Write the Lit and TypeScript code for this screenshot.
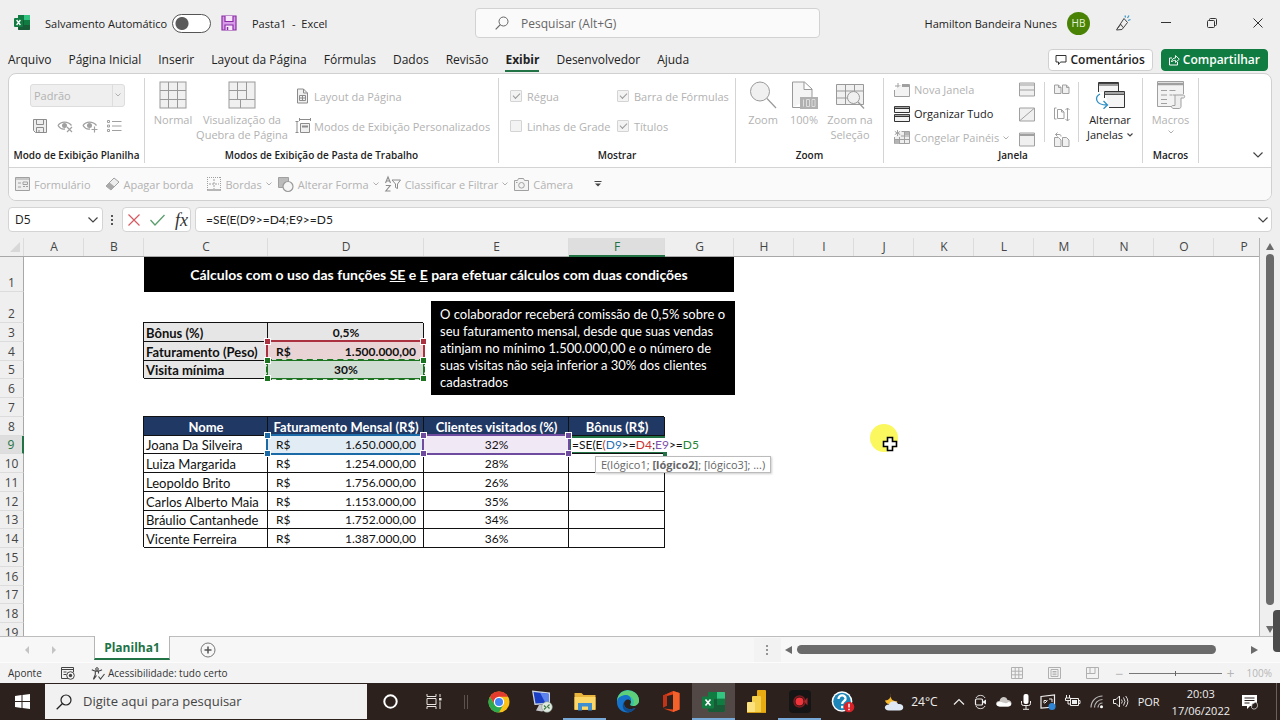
import { LitElement, html, svg, css, nothing, TemplateResult } from "lit";
import { customElement } from "lit/decorators.js";
import { classMap } from "lit/directives/class-map.js";
import { styleMap } from "lit/directives/style-map.js";

const icon = (w: number, h: number, body: TemplateResult) =>
  html`<svg class="icon" width=${w} height=${h} viewBox="0 0 ${w} ${h}" aria-hidden="true">${body}</svg>`;

const GREY = "#a0a0a0";

const icons = {
  excel: icon(16, 16, svg`<rect x="4" y="0" width="12" height="15" rx="1" fill="#21a366"/><path d="M4 0h6v5H4z" fill="#107c41"/><path d="M10 0h5a1 1 0 0 1 1 1v4h-6z" fill="#33c481"/><path d="M4 5h6v5H4z" fill="#185c37"/><path d="M10 5h6v5h-6z" fill="#107c41"/><path d="M4 10h12v4a1 1 0 0 1-1 1H5a1 1 0 0 1-1-1z" fill="#185c37"/><rect x="0" y="3" width="9" height="9" rx="1" fill="#107c41"/><path d="M2.600 5l3.800 5M6.400 5l-3.800 5" stroke="#fff" stroke-width="1.300"/>`),
  save: icon(16, 16, svg`<path d="M1 1h14v14H1z" fill="#d79be8" stroke="#8a2da5" stroke-width="1.200"/><path d="M4 1v5.500h8V1" fill="#f6e8fa" stroke="#8a2da5" stroke-width="1.200"/><path d="M4 15v-5h8v5" fill="#f6e8fa" stroke="#8a2da5" stroke-width="1.200"/><path d="M6.500 12v3" stroke="#8a2da5" stroke-width="1.500"/>`),
  saveGrey: icon(16, 16, svg`<path d="M1.500 1.500h13v13h-11l-2-2z" fill="#eee" stroke="#8c8c8c"/><path d="M4.500 1.500v5h7v-5M4.500 14.500v-5h7v5M7 12v2.500" fill="none" stroke="#8c8c8c"/>`),
  search: icon(14, 14, svg`<circle cx="8.500" cy="5.500" r="4.500" fill="none" stroke="#666"/><path d="M5.300 8.700L.7 13.300" stroke="#666" stroke-width="1.200"/>`),
  pen: icon(16, 16, svg`<path d="M9 3.500l3.500 4L7 14.500l-5.500.5L5 9.500 9 3.500zM2 14l4-5M8 12.500l-2-3" fill="none" stroke="#444"/><path d="M10.500 2.500l-.5-2M12.500 3l1.500-2.500M13 5.500l2.500-1" stroke="#3a96c8" stroke-width="1.200"/>`),
  min: icon(10, 10, svg`<path d="M0 4.500h10" stroke="#333"/>`),
  restore: icon(10, 10, svg`<rect x=".5" y="2.500" width="7" height="7" rx="1" fill="none" stroke="#333"/><path d="M2.500 2.500v-1a1 1 0 0 1 1-1H8.500a1 1 0 0 1 1 1V6.500a1 1 0 0 1-1 1H8" fill="none" stroke="#333"/>`),
  close: icon(10, 10, svg`<path d="M.5.5l9 9M9.500.5l-9 9" stroke="#333"/>`),
  comment: icon(12, 12, svg`<path d="M1 1.500h10v6.500H5.500L3.500 10.500V8H1z" fill="none" stroke="#333"/>`),
  share: icon(12, 12, svg`<path d="M4 4H1.500v7h8V8" fill="none" stroke="#fff"/><path d="M3.500 8c.3-2.800 1.700-4 4-4V1.500l3.800 3.700L7.500 8.500V6.300C5.700 6.300 4.500 6.800 3.500 8z" fill="none" stroke="#fff" stroke-width=".9"/>`),
  eyeX: icon(16, 14, svg`<path d="M1 6.500C4 2 11 2 14.500 6.500M1 6.500C3 9.500 6 10.500 8 10" fill="none" stroke="${GREY}" stroke-width="1.300"/><circle cx="7.500" cy="6.500" r="2.500" fill="${GREY}"/><path d="M10 8l5 5M15 8l-5 5" stroke="${GREY}" stroke-width="1.200"/>`),
  eyePlus: icon(16, 14, svg`<path d="M1 6.500C4 2 11 2 14.500 6.500M1 6.500C3 9.500 6 10.500 8 10" fill="none" stroke="${GREY}" stroke-width="1.300"/><circle cx="7.500" cy="6.500" r="2.500" fill="${GREY}"/><path d="M12.500 7.500v6M9.500 10.500h6" stroke="${GREY}" stroke-width="1.200"/>`),
  list: icon(15, 12, svg`<path d="M5 1.500h9.500M5 6h9.500M5 10.500h9.500" stroke="${GREY}"/><path d="M.5.5h2v2h-2zM.5 5h2v2h-2zM.5 9.500h2v2h-2z" fill="none" stroke="${GREY}"/>`),
  gridNormal: icon(28, 28, svg`<rect x="1" y="1" width="26" height="26" fill="#f0f0f0" stroke="#999"/><path d="M9.500 1v26M18.500 1v26M1 9.500h26M1 18.500h26" stroke="#999"/>`),
  gridBreak: icon(28, 28, svg`<rect x="1" y="1" width="26" height="26" fill="#f0f0f0" stroke="#999"/><path d="M9.500 1v17M18.500 1v17M1 9.500h17.500M1 18.500h26M12.500 18.500V27" stroke="#999"/>`),
  pageLayout: icon(14, 16, svg`<path d="M1.500 1h6l4 4v10h-10z" fill="#f0f0f0" stroke="#8c8c8c"/><path d="M7.500 1v4h4M3.500 7.500h6v5h-6zM6.500 7.500v5M3.500 10h6" fill="none" stroke="#8c8c8c"/>`),
  customView: icon(16, 16, svg`<path d="M.5 3.500h3M.5 14.500h3M2 3.500v11M4.500 1.500h11M4.500 0v3M15.500 0v3" stroke="#8c8c8c"/><path d="M5.500 5.500h9v9h-9z" fill="#f0f0f0" stroke="#8c8c8c"/><path d="M7 7.500h6v2H7z" fill="#8c8c8c"/>`),
  zoom: icon(28, 28, svg`<circle cx="11" cy="10.500" r="9.500" fill="#f0f0f0" stroke="#999"/><path d="M18 17.500L27 27" stroke="#999" stroke-width="1.200"/>`),
  zoom100: icon(28, 28, svg`<path d="M2.500 26.500V1h12l7.500 7v8M14 1v7.500h8M2.500 26.500h8" fill="#f4f4f4" stroke="#999"/><rect x="10" y="16" width="18" height="12" fill="#b0b0b0"/><path d="M13.500 18.500v7M16.500 18.500h3v7h-3zM22 18.500h3v7h-3z" fill="none" stroke="#ddd"/>`),
  zoomSel: icon(28, 28, svg`<path d="M.5 3.500h27v20H.5z" fill="#f0f0f0" stroke="#999"/><path d="M.5 10h27M.5 17h12M9.500 3.500v20M18.500 3.500V10" stroke="#999"/><circle cx="17.500" cy="16.500" r="6" fill="#f0f0f0" stroke="#999"/><path d="M22 21l6 6.500" stroke="#999" stroke-width="1.300"/>`),
  newWin: icon(16, 14, svg`<path d="M4 0v6M1 3h6" stroke="${GREY}"/><path d="M8 1.500h7.500v12H.5V7" fill="#f3f3f3" stroke="${GREY}"/><path d="M8 2h7v2H8z" fill="${GREY}"/>`),
  arrange: icon(16, 16, svg`<path d="M.5.5h15v6H.5zM.5 8.500h15v7H.5z" fill="#f2f2f2" stroke="#333"/><path d="M1 2.500h14M1 10.500h14" stroke="#333"/><path d="M1 1h14M1 9h14" stroke="#555"/>`),
  freeze: icon(16, 15, svg`<path d="M7.500 1.500h8v12H.5V7" fill="#eee" stroke="${GREY}"/><path d="M7 6h9M1 9.500h15M5.500 7v7M10.500 1v13" stroke="${GREY}"/><path d="M1 10h4v4H1zM11 2h4v3h-4z" fill="#b5b5b5"/><path d="M3.500 0v6M.8 1.400l5.400 3.200M6.200 1.400L.8 4.600" stroke="${GREY}"/>`),
  split: icon(16, 14, svg`<path d="M.5.5h15v13H.5z" fill="#f0f0f0" stroke="${GREY}"/><path d="M1 2.500h14M1 7.500h14" stroke="${GREY}"/>`),
  hide: icon(16, 14, svg`<path d="M.5.5h15v13H.5zM1 13L15 1" fill="#f0f0f0" stroke="${GREY}"/>`),
  unhide: icon(16, 14, svg`<path d="M.5.5h15v13H.5z" fill="#f0f0f0" stroke="${GREY}"/><path d="M1 2.500h14" stroke="${GREY}" stroke-width="2"/>`),
  sideBySide: icon(16, 12, svg`<path d="M.5 1.500h4l2.500 2.500v6H.5zM4.500 1.500V4H7M8.500 1.500h4l2.500 2.500v6H8.500zM12.500 1.500V4H15" fill="#f0f0f0" stroke="${GREY}"/>`),
  syncScroll: icon(16, 14, svg`<path d="M2.500.5h-2v11h2M3.500 2h4L10 4.500V11H3.500zM7.500 2v2.500H10" fill="none" stroke="${GREY}"/><path d="M13.500.5v13M11.500 2.500l2-2 2 2M11.500 11.500l2 2 2-2" fill="none" stroke="${GREY}"/>`),
  resetPos: icon(16, 15, svg`<path d="M.5 5.500h4L7 8v6.500H.5zM8.500 5.500h4L15 8v6.500H8.500z" fill="#f0f0f0" stroke="${GREY}"/><path d="M3.500.5l-2 2 2 2M1.500 2.500H5c2 0 2 1 2 2" fill="none" stroke="${GREY}"/>`),
  switchWin: icon(30, 28, svg`<path d="M3.500 11V1.500h20V10" fill="#f5f5f5" stroke="#333"/><path d="M3.500 2.500h20M3.500 4h20" stroke="#444"/><path d="M9.500 10.500h20v16H14M9.500 10.500V17" fill="#f5f5f5" stroke="#333"/><path d="M9.500 12h20M9.500 13.500h20" stroke="#555"/><path d="M5 13C-.5 16 0 24 12 24M8.500 20l4 4-4 3.700" fill="none" stroke="#2f8fc4" stroke-width="1.300"/>`),
  macros: icon(28, 28, svg`<path d="M16 25.500H.5V.5h26V13" fill="#f3f3f3" stroke="${GREY}"/><path d="M1 3h25" stroke="${GREY}" stroke-width="2.500"/><path d="M4 9.500h6M12.500 9.500h6M4 14h6M12.500 14h3M4 18.500h6M4 22.500h6" stroke="${GREY}"/><path d="M16 14h10.500c1.500 0 1.500 3 0 3H24v8.500c0 2-2 2-2 2h-6c-2-1-2-3 0-3h2V14" fill="#eee" stroke="${GREY}"/>`),
  form: icon(15, 14, svg`<path d="M.5.5h14v13H.5z" fill="#eee" stroke="${GREY}"/><path d="M1 2h13M3 6h3M3 10h3M8 5h4.500v2.500H8zM8 9.500h2M11 9.500h2" stroke="${GREY}" fill="none"/>`),
  eraser: icon(15, 14, svg`<path d="M9 1l5 4-8 8-5-4z" fill="#eee" stroke="${GREY}"/><path d="M4.500 5.500l5 4-3.500 3.500-5-4z" fill="#aaa"/>`),
  borders: icon(14, 14, svg`<path d="M.5 0v14M13.500 0v14M0 .5h14" stroke="${GREY}" stroke-dasharray="1 1"/><path d="M7 2v10M2 7h10" stroke="${GREY}" stroke-dasharray="2 1"/><path d="M0 13h14" stroke="${GREY}" stroke-width="1.500"/>`),
  shape: icon(16, 15, svg`<path d="M.5.5h10v10h-10z" fill="#bbb" stroke="${GREY}"/><circle cx="10" cy="9.500" r="5" fill="#f5f5f5" stroke="#999" stroke-width="1.200"/>`),
  sort: icon(16, 16, svg`<path d="M.5 7L3 1l2.500 6M1.500 5h3M.8 9.500h4.500L.8 15h4.700" fill="none" stroke="#8c8c8c" stroke-width="1.100"/><path d="M7 4h8.500L12.500 8v4.500l-2-1V8z" fill="none" stroke="#8c8c8c"/>`),
  camera: icon(15, 13, svg`<path d="M.5 2.500h3L4.500.5h5l1 2h4v10H.5z" fill="#f3f3f3" stroke="${GREY}"/><circle cx="7.500" cy="7.300" r="2.800" fill="none" stroke="${GREY}"/><path d="M2 4.500h1.500" stroke="${GREY}"/>`),
  more: icon(8, 6, svg`<path d="M.5.5h7" stroke="#444"/><path d="M1 2.500l3 3 3-3z" fill="#444"/>`),
  chevGrey: icon(6, 4, svg`<path d="M.5.5L3 3 5.500.5" fill="none" stroke="#b0b0b0"/>`),
  chevDark: icon(6, 4, svg`<path d="M.5.5L3 3 5.500.5" fill="none" stroke="#444" stroke-width="1.200"/>`),
  chevBig: icon(10, 6, svg`<path d="M.5.5L5 5 9.500.5" fill="none" stroke="#444" stroke-width="1.200"/>`),
  dots: icon(3, 10, svg`<path d="M0 0h2v2H0zM0 4h2v2H0zM0 8h2v2H0z" fill="#555"/>`),
  cancel: icon(12, 12, svg`<path d="M.5.5l11 11M11.500.5l-11 11" stroke="#d65a60" stroke-width="1.200"/>`),
  ok: icon(15, 12, svg`<path d="M.5 6l4.500 5L14.500 1" fill="none" stroke="#5a9e6c" stroke-width="1.300"/>`),
  tri: (d: string, fill: string) => icon(8, 8, svg`<path d=${d} fill=${fill}/>`),
  plus: icon(16, 16, svg`<circle cx="8" cy="8" r="7" fill="none" stroke="#777"/><path d="M8 4.500v7M4.500 8h7" stroke="#555" stroke-width="1.500"/>`),
  macroRec: icon(14, 13, svg`<path d="M7 11.500H.5v-11h12V5" fill="none" stroke="#444"/><path d="M.5 2.500h12M2.500 5h3M2.500 7.500h3" stroke="#444"/><circle cx="9.500" cy="8.500" r="3.800" fill="#f3f3f3" stroke="#444"/><circle cx="9.500" cy="8.500" r="1.700" fill="#444"/>`),
  access: icon(14, 13, svg`<circle cx="6" cy="2" r="1.300" fill="none" stroke="#444"/><path d="M.8 2.800C3.500 4.500 8.500 4.500 11 2.800M4.300 4.500v3L2.500 12M7.500 4.500v2M2.500 12.500L5.500 8.500M7.500 9.500l2 2.500 4-5" fill="none" stroke="#444" stroke-width="1.100"/>`),
  vNormal: icon(12, 12, svg`<path d="M.5.5h11v11H.5zM4.200.5v11M7.800.5v11M.5 4.200h11M.5 7.800h11" fill="none" stroke="#b0b0b0"/>`),
  vPage: icon(13, 12, svg`<path d="M.5.5h12v11H.5zM3 2.500h7v7H3zM4.500 4.500h4M4.500 6h4M4.500 7.700h4" fill="none" stroke="#b0b0b0"/>`),
  vBreak: icon(13, 12, svg`<path d="M.5.5h12v11H.5zM4 .5v6h5v-6M.5 6.500H4" fill="none" stroke="#b0b0b0"/>`),
  win: icon(15, 15, svg`<path d="M0 2l6.500-1v6H0zM7.500.9L15 0v7H7.500zM0 8h6.500v6L0 13zM7.500 8H15v7l-7.500-1z" fill="#fff"/>`),
  tbSearch: icon(16, 16, svg`<circle cx="10" cy="6" r="5" fill="none" stroke="#222" stroke-width="1.200"/><path d="M6.500 9.500L.7 15.300" stroke="#222" stroke-width="1.300"/>`),
  cortana: icon(15, 15, svg`<circle cx="7.500" cy="7.500" r="6.200" fill="none" stroke="#fff" stroke-width="2"/>`),
  taskView: icon(16, 15, svg`<path d="M1 0v2.500h9V0M1 15v-2.500h9V15M1 4.500h9v6H1z" fill="none" stroke="#e8e4e2"/><path d="M14 0v3M14 7.500V15" stroke="#e8e4e2"/><path d="M13 4h2.500v2.500H13z" fill="#e8e4e2"/>`),
  chrome: icon(22, 22, svg`<circle cx="11" cy="11" r="10.500" fill="#fbc116"/><path d="M11 5.750h9.100A10.500 10.500 0 0 0 1.900 5.750L6.500 13.600z" fill="#e33b2e"/><path d="M1.900 5.750A10.500 10.500 0 0 0 11 21.500l4.500-7.900-9 0z" fill="#2da94f"/><circle cx="11" cy="11" r="5.200" fill="#fff"/><circle cx="11" cy="11" r="4" fill="#4285f4"/>`),
  remote: icon(22, 23, svg`<path d="M1 .5l18 2V14L3.500 15z" fill="#cdd7e6"/><path d="M2.500 2l15 1.800v9L4.500 13.500z" fill="#1a3ec4"/><path d="M9 2.800l8.500 1v9l-3 .2z" fill="#5d83ee"/><path d="M8 15l6-.5 2 5-5 2-6-1z" fill="#c8c8cc"/><circle cx="16" cy="17" r="5.300" fill="#dfe9df" stroke="#8a9a8a" stroke-width=".6"/><path d="M13 15.500l2 2-2 2M18.500 14.500l-2 2 2 2" fill="none" stroke="#3e7a45" stroke-width="1.200"/>`),
  explorer: icon(22, 19, svg`<path d="M.5 1h7l2 2h12v15H.5z" fill="#e8b43c"/><path d="M.5 5h21v12.500H.5z" fill="#fbd768"/><path d="M4 11h14v7.500h-4v-4H8v4H4z" fill="#3e8ed0"/>`),
  edge: icon(24, 23, svg`<path d="M1 12A11 11 0 0 1 23 10c.3 4-3 6-6.500 6-2 0-3-1.200-2-2.400 1.500-2.400-.5-5.600-4-5.600C5.500 8 2 11 1 14z" fill="#36c2a8"/><path d="M12 .8c6.500 0 11 4.500 11 9.700 0 3.500-3 5.500-6.500 5.500 3-4 1-9-4.500-10.500C8 4.500 3.500 6.500 1.500 9 2.500 4 7 .8 12 .8z" fill="#5fd07a"/><path d="M1 12c.5-5 5-7 9.500-7 3 .5 5 3 4.500 6-2.500-3-7-1.500-7 2.800 0 4.200 5 7 11.500 4.200-3 3.800-6 4.500-8 4.500C5.500 22.500.8 18 1 12z" fill="#1573c9"/><path d="M8 13.800c0 4.200 5 7 11.500 4.200-2 2.500-4 3.700-6.500 4.300C7.500 21.500 5 16.500 8 12z" fill="#114a8b"/>`),
  office: icon(18, 21, svg`<path d="M11 0l6.500 2v16.500L11 21 1.500 17.500 11 18.500V3.500L5 5v9.500l-4 2V4.500z" fill="#e0431b"/><path d="M11 0l6.500 2v16.500L11 21z" fill="#f4622c"/><path d="M1 4.500L5 3v11.500l-4 2z" fill="#c13417"/>`),
  excelBig: icon(23, 20, svg`<rect x="6" y="0" width="17" height="20" rx="1" fill="#21a366"/><path d="M6 0h9v6.500H6zM15 6.500h8V13h-8z" fill="#107c41"/><path d="M15 0h7a1 1 0 0 1 1 1v5.500h-8z" fill="#33c481"/><path d="M6 6.500h9V13H6zM6 13h17v6a1 1 0 0 1-1 1H7a1 1 0 0 1-1-1z" fill="#185c37"/><rect x="0" y="4.500" width="12" height="12" rx="1" fill="#107c41"/><path d="M3.500 7.500l5 6M8.500 7.500l-5 6" stroke="#fff" stroke-width="1.600"/>`),
  powerBi: icon(19, 23, svg`<rect x="10" y="0" width="9" height="23" rx="1" fill="#e8ab12"/><rect x="5" y="6" width="9" height="17" rx="1" fill="#f4cf4b"/><rect x="0" y="12" width="8" height="11" rx="1" fill="#fbe27e"/><path d="M0 22h19v1H0z" fill="#d29a10"/>`),
  rec: icon(22, 23, svg`<rect width="22" height="23" rx="4" fill="#151515"/><circle cx="10.500" cy="11.500" r="5.500" fill="none" stroke="#7c1c20" stroke-width="1.500"/><circle cx="10.500" cy="11.500" r="4" fill="#f0343c"/><path d="M15 11.500l3.500-4v8z" fill="#a3282c"/>`),
  help: icon(24, 22, svg`<circle cx="11" cy="10.500" r="10.300" fill="#fff"/><circle cx="11" cy="10.500" r="8.800" fill="#1c86b8"/><path d="M7.500 8c0-5 7.500-4.500 7 0-.3 2.200-3.300 2.200-3.300 5M11.200 14.800v2.400" fill="none" stroke="#fff" stroke-width="2.300"/><circle cx="18" cy="16" r="5.300" fill="#d8222a"/><path d="M18 12.800v3.800M18 17.800v1.400" stroke="#fff" stroke-width="1.400"/>`),
  weather: icon(20, 18, svg`<path d="M7 .5c-1.500 5 2 8.500 6.500 7.500C11.500 12 5 13 2 9.500 1 8 1 7.500 1 7.500 5 7.500 7 4.500 7 .5z" fill="#f5b82e"/><path d="M5 17.500c-5.500 0-5.500-6 0-6 1-4 7.500-4.500 9-.5 6.500-1 7 6.500 1.500 6.500z" fill="#dfe9f6"/>`),
  caretUp: icon(12, 8, svg`<path d="M1 6.500L6 1.500l5 5" fill="none" stroke="#eee" stroke-width="1.200"/>`),
  meet: icon(13, 16, svg`<path d="M2 4C3.500.5 9.500.5 11 4M2 12c1.500 3.500 7.500 3.500 9 0" fill="none" stroke="#ddd"/><rect x="1.500" y="5" width="7" height="6" rx="1" fill="none" stroke="#eee" stroke-width="1.200"/><path d="M9 7.500L12 5.500v5L9 8.500z" fill="#eee"/>`),
  cloud: icon(16, 11, svg`<path d="M4 10.500c-5 0-5-5.500-.5-5.500C4.500 0 10.500 0 11.500 4c5 0 5.500 6.500.5 6.500z" fill="#c9c6c4"/><path d="M4 10.500c-4 0-4.500-4-1-4.500 3-1 6 3 9.500 0 4 .5 3 4.500-.5 4.500z" fill="#fff"/>`),
  mic: icon(10, 16, svg`<rect x="2.500" y="0" width="5" height="10" rx="2" fill="#fff"/><path d="M.5 7v2.500a2 2 0 0 0 2 2h5a2 2 0 0 0 2-2V7M5 12v3M2 15.300h6" fill="none" stroke="#eee"/>`),
  display: icon(16, 16, svg`<path d="M1 2.500L14.500 1v12L1 14z" fill="none" stroke="#eee" stroke-width="1.200"/><path d="M4 9V6.500h2.500M9 5h3v3M4.500 9.500l3-3" stroke="#eee" fill="none"/><circle cx="12" cy="12.500" r="3.500" fill="#2f86d6"/>`),
  battery: icon(16, 13, svg`<path d="M5.500 3.500h8v7h-8zM13.500 5.500h1.500v3h-1.500" fill="none" stroke="#eee"/><path d="M7 5h5v4H7z" fill="#eee"/><path d="M1.500 0v3M4.500 0v3M.5 3h5v2.500h-5zM3 5.500V9h2.500" stroke="#eee" fill="none"/>`),
  wifi: icon(14, 14, svg`<path d="M1 12.500A11.500 11.500 0 0 1 12.500 1M4.500 12.500A8 8 0 0 1 12.500 4.500M8 12.500A4.500 4.500 0 0 1 12.500 8" fill="none" stroke="#bbb" stroke-width="1.200"/><circle cx="11.500" cy="11.800" r="1.500" fill="#fff"/>`),
  sound: icon(16, 13, svg`<path d="M.5 4.500h2.500L6.500 1v11L3 8.500H.5z" fill="none" stroke="#eee"/><path d="M8.500 4.500q1.500 2 0 4M10.500 2.500q3 4 0 8M12.700 1q4.300 5.500 0 11" fill="none" stroke="#ddd"/>`),
  notif: icon(16, 16, svg`<path d="M0 1h15v11H8l-3 3v-3H0z" fill="#fff"/><path d="M2.500 4h10M2.500 6.500h10M2.500 9h5" stroke="#2a211e"/><path d="M10 10l4-2c2 2 2 5 0 6.500-2 1-4 .5-4.500-1z" fill="#2a211e" stroke="#ddd" stroke-width=".8"/>`),
  cross: icon(16, 16, svg`<path d="M5.500 1.500h5v4h4v5h-4v4h-5v-4h-4v-5h4z" fill="#fff" stroke="#000" stroke-width="1.600"/>`),
};

const COLUMNS: [string, number][] = [
  ["A", 60], ["B", 60], ["C", 124], ["D", 156], ["E", 145], ["F", 96], ["G", 69], ["H", 60],
  ["I", 60], ["J", 60], ["K", 60], ["L", 60], ["M", 60], ["N", 60], ["O", 60], ["P", 60],
];
const ROW_HEIGHTS = [35, 31, 19, 19, 18, 19, 19, 19, 18, 19, 19, 19, 18, 19, 19, 19, 18, 19, 19];

const PEOPLE = [
  ["Joana Da Silveira", "1.650.000,00", "32%"],
  ["Luiza Margarida", "1.254.000,00", "28%"],
  ["Leopoldo Brito", "1.756.000,00", "26%"],
  ["Carlos Alberto Maia", "1.153.000,00", "35%"],
  ["Bráulio Cantanhede", "1.752.000,00", "34%"],
  ["Vicente Ferreira", "1.387.000,00", "36%"],
];

const range = (kind: string) =>
  html`<span class="range ${kind}"><i class="h tl"></i><i class="h tr"></i><i class="h bl"></i><i class="h br"></i></span>`;

const money = (v: string) => html`<span class="money"><span>R$</span><span>${v}</span></span>`;

@customElement("excel-sheet")
class ExcelSheet extends LitElement {
  static styles = css`
    :host { display: block; flex: 1; min-width: 0; overflow: hidden; position: relative; }
    table { border-collapse: separate; border-spacing: 0; table-layout: fixed; width: 1274px; font: 13px/16px Lato, Carlito, sans-serif; font-variant-ligatures: none; color: #111; }
    th, td { padding: 0; box-sizing: border-box; }
    thead th { height: 19px; background: #efefef; border-bottom: 1px solid #a8a8a8; font: 12px/16px "Open Sans", sans-serif; color: #444; box-shadow: inset -1px 0 #dcdcdc; }
    thead th.on { background: #dedede; color: #217346; border-bottom: 2px solid #217346; }
    .corner { display: block; margin: 0 4px 0 auto; width: 0; border-left: 10px solid transparent; border-bottom: 10px solid #d8d8d8; }
    tbody th.num { background: #efefef; font: 12px/16px "Open Sans", sans-serif; color: #444; vertical-align: bottom; border-right: 1px solid #a8a8a8; border-bottom: 1px solid #dcdcdc; }
    tbody th.num.on { background: #dedede; color: #217346; border-right: 2px solid #217346; }
    .title { background: #000; color: #fff; font-weight: 700; text-align: center; vertical-align: middle; font-size: 14px; }
    .b { box-shadow: inset -1px -1px #111, -1px -1px #111; position: relative; white-space: nowrap; }
    .k { background: #e7e6e6; font-weight: 700; }
    .l { padding-left: 2px; text-align: left; }
    .c { text-align: center; font-size: 12px; }
    .hd { background: #1f3864; color: #fff; font-weight: 700; text-align: center; }
    .money { display: flex; justify-content: space-between; padding: 0 8px; position: relative; z-index: 2; font-size: 12px; }
    .v { position: relative; z-index: 2; }
    .range { position: absolute; inset: -2px -1px -1px -2px; border: 2px solid; z-index: 1; }
    .h { position: absolute; width: 5px; height: 5px; background: currentColor; outline: 1px solid #fff; }
    .tl { top: -3px; left: -3px; } .tr { top: -3px; right: -3px; }
    .bl { bottom: -3px; left: -3px; } .br { bottom: -3px; right: -3px; }
    .red { color: #ab3040; background: #e9d3d4; }
    .green { color: #1c7320; background: #d0ddd2; border-style: dashed; outline: 1px solid #1c7320; outline-offset: -2px; }
    .blue { color: #1b6aa8; background: #e2ecf5; }
    .purple { color: #6f4ba0; background: #f1e8f6; }
    .edit { box-shadow: inset 0 2px #217346, inset 2px 0 #217346, inset 0 -2px #217346; font-size: 12px; }
    .edit .v { padding-left: 3px; }
    .f1 { color: #c0392b; } .f2 { color: #2a72b5; } .f3 { color: #c33; } .f4 { color: #7d54ab; } .f5 { color: #2a8432; }
    .corner-dot { position: absolute; right: -2px; bottom: -2px; width: 4px; height: 4px; background: #217346; z-index: 2; }
    .tip { position: absolute; left: 26px; top: 20px; z-index: 4; background: #fff; border: 1px solid #bbb; box-shadow: 1px 1px 2px #0003; padding: 0 5px; font: 11px/15px "Open Sans", sans-serif; color: #666; }
    .note { position: absolute; left: 431px; top: 63px; width: 304px; min-height: 94px; box-sizing: border-box; padding: 5px 9px 4px; background: #000; color: #fff; font: 13px/17px Lato, Carlito, sans-serif; font-variant-ligatures: none; }
    .pointer { position: absolute; left: 870px; top: 186px; width: 28px; height: 28px; border-radius: 50%; background: #fbf75f; z-index: 5; }
    .pointer .icon { position: absolute; left: 12px; top: 12px; }
  `;

  private cells(row: number) {
    const gap = (n: number) => html`<td colspan=${n}></td>`;
    if (row === 1) return html`${gap(2)}<td class="title" colspan="5">Cálculos com o uso das funções <u>SE</u> e <u>E</u> para efetuar cálculos com duas condições</td>${gap(9)}`;
    if (row === 3) return html`${gap(2)}<td class="b k l">Bônus (%)</td><td class="b k c">0,5%</td>${gap(12)}`;
    if (row === 4) return html`${gap(2)}<td class="b k l">Faturamento (Peso)</td><td class="b k">${range("red")}${money("1.500.000,00")}</td>${gap(12)}`;
    if (row === 5) return html`${gap(2)}<td class="b k l">Visita mínima</td><td class="b k c">${range("green")}<span class="v">30%</span></td>${gap(12)}`;
    if (row === 8) return html`${gap(2)}${["Nome", "Faturamento Mensal (R$)", "Clientes visitados (%)", "Bônus (R$)"].map((t) => html`<td class="b hd">${t}</td>`)}${gap(10)}`;
    if (row >= 9 && row <= 14) {
      const [name, value, visits] = PEOPLE[row - 9];
      const first = row === 9;
      return html`${gap(2)}
        <td class="b l">${name}</td>
        <td class="b">${first ? range("blue") : nothing}${money(value)}</td>
        <td class="b c">${first ? range("purple") : nothing}<span class="v">${visits}</span></td>
        ${first
          ? html`<td class="b edit"><span class="v">=SE(E<span class="f1">(</span><span class="f2">D9</span>&gt;=<span class="f3">D4</span>;<span class="f4">E9</span>&gt;=<span class="f5">D5</span></span><i class="corner-dot"></i><span class="tip">E(lógico1; <b>[lógico2]</b>; [lógico3]; ...)</span></td>`
          : html`<td class="b"></td>`}
        ${gap(10)}`;
    }
    return gap(16);
  }

  render() {
    return html`
      <table>
        <colgroup><col style=${styleMap({ width: "24px" })} />${COLUMNS.map(([, w]) => html`<col style=${styleMap({ width: `${w}px` })} />`)}</colgroup>
        <thead><tr><th><span class="corner"></span></th>${COLUMNS.map(([n]) => html`<th scope="col" class=${classMap({ on: n === "F" })}>${n}</th>`)}</tr></thead>
        <tbody>${ROW_HEIGHTS.map((h, i) => html`<tr style=${styleMap({ height: `${h}px` })}><th scope="row" class=${classMap({ num: true, on: i === 8 })}>${i + 1}</th>${this.cells(i + 1)}</tr>`)}</tbody>
      </table>
      <div class="note">O colaborador receberá comissão de 0,5% sobre o seu faturamento mensal, desde que suas vendas atinjam no mínimo 1.500.000,00 e o número de suas visitas não seja inferior a 30% dos clientes cadastrados</div>
      <div class="pointer">${icons.cross}</div>
    `;
  }
}

@customElement("app-root")
class AppRoot extends LitElement {
  static styles = css`
    :host { display: flex; flex-direction: column; height: 100vh; overflow: hidden; background: #efefef; color: #222; font: 11px/15px "Open Sans", "Noto Sans", sans-serif; }
    * { box-sizing: border-box; }
    button { font: inherit; color: inherit; background: none; border: 0; padding: 0; display: flex; align-items: center; white-space: nowrap; }
    input, select { font: inherit; color: inherit; margin: 0; border: 0; background: none; outline: 0; padding: 0; }
    .icon { display: block; flex: none; overflow: visible; }

    .titlebar { display: grid; grid-template-columns: 475fr 345px 460fr; height: 46px; align-items: center; flex: none; }
    .left { display: flex; align-items: center; padding-left: 14px; }
    .left label { margin: 0 6px 0 15px; width: 121px; white-space: nowrap; }
    .toggle { appearance: none; width: 39px; height: 19px; border: 1px solid #555; border-radius: 10px; background: radial-gradient(circle 6px at 9px 50%, #5a5a5a 6px, #fff 7px); margin-right: 10px; }
    .doc { margin-left: 15px; white-space: pre; }
    .search { display: flex; align-items: center; gap: 12px; height: 30px; border: 1px solid #d2d2d2; border-radius: 4px; background: #fafafa; padding-left: 19px; color: #666; font-size: 12px; }
    .search input { flex: 1; min-width: 0; }
    .search input::placeholder, .tsearch input::placeholder { color: inherit; opacity: 1; }
    .right { display: flex; align-items: center; justify-content: flex-end; padding-right: 17px; white-space: nowrap; }
    .avatar { width: 23px; height: 23px; border-radius: 50%; background: #498205; color: #e6f2d8; font-size: 10px; text-align: center; line-height: 23px; margin: 0 25px 0 10px; }
    .wins { display: flex; gap: 36px; margin-left: 30px; }

    .tabs { display: flex; height: 27px; align-items: center; padding: 0 12px 0 8px; font-size: 12px; flex: none; }
    nav { display: flex; gap: 17px; flex: 1; }
    nav a { color: #222; text-decoration: none; height: 24px; line-height: 24px; white-space: nowrap; }
    nav a.on { font-weight: 700; border-bottom: 2px solid #217346; }
    .pill { height: 22px; border-radius: 4px; border: 1px solid #d0d0d0; background: #fff; padding: 0 7px 0 6px; gap: 3px; font-weight: 600; margin-left: 8px; }
    .pill.go { background: #107c41; border-color: #107c41; color: #fff; }

    .ribbon { margin: 0 8px; border: 1px solid #d0d0d0; border-radius: 8px; background: #fff; flex: none; overflow: hidden; }
    .groups { display: flex; height: 93px; }
    .group { display: flex; flex-direction: column; position: relative; border-right: 1px solid #d4d4d4; margin: 4px 0; }
    .body { height: 71px; display: flex; color: #b2b2b2; align-items: flex-start; }
    .caption { text-align: center; font-weight: 600; line-height: 16px; font-size: 10px; white-space: nowrap; color: #222; }
    .g1 { width: 136px; } .g2 { width: 354px; } .g3 { width: 237px; } .g4 { width: 148px; } .g5 { width: 259px; } .g6 { width: 56px; }
    .col { display: flex; flex-direction: column; }
    .views { padding: 6px 0 0 21px; gap: 11px; }
    .views select { appearance: none; display: block; width: 95px; height: 23px; border: 1px solid #ddd; border-radius: 3px; background: linear-gradient(#ddd, #ddd) 81px 0 / 1px 100% no-repeat #efefef; padding: 0 3px; color: #b2b2b2; opacity: 1; }
    .combo { position: relative; width: 95px; }
    .combo .icon { position: absolute; right: 4px; top: 9px; }
    .vicons { display: flex; gap: 9px; align-items: center; padding-left: 2px; }
    .big { flex-direction: column; gap: 3px; text-align: center; justify-content: flex-start; padding-top: 3px; }
    .dark { color: #222; }
    .ctr { display: flex; align-items: center; gap: 4px; }
    .w57 { width: 56px; } .w82 { width: 82px; }
    .lines { padding: 10px 0 0 12px; gap: 14px; }
    .lines button { gap: 3px; height: 16px; }
    .lines .icon { width: 16px; }
    .checks { display: grid; grid-template-columns: 107px auto; grid-auto-rows: 16px; row-gap: 14px; padding: 10px 0 0 11px; align-content: start; }
    .checks label { display: flex; align-items: center; gap: 5px; white-space: nowrap; }
    .checks input { appearance: none; width: 12px; height: 12px; border: 1px solid #d4d4d4; border-radius: 1px; background: #f3f3f3; display: grid; place-items: center; }
    .checks input:checked::before { content: ""; width: 6px; height: 3px; margin-top: -2px; border: solid #999; border-width: 0 0 1px 1px; transform: rotate(-45deg); }
    .zooms { padding-left: 6px; }
    .z1 { width: 42px; } .z2 { width: 40px; } .z3 { width: 52px; }
    .win { padding: 3px 0 0 10px; gap: 7px; width: 135px; }
    .win button { gap: 4px; height: 17px; }
    .small { padding: 4px 0 0; gap: 10px; width: 25px; }
    .small.two { border-left: 1px solid #d4d4d4; border-right: 1px solid #d4d4d4; width: 35px; align-items: center; height: 60px; margin-top: 4px; padding-top: 0; }
    .small .icon { width: 16px; height: 15px; }
    .alt { width: 62px; }
    .expand { margin: auto 8px 9px auto; }

    .qat { display: flex; align-items: center; height: 33px; border-top: 1px solid #d4d4d4; background: #fafafa; color: #b2b2b2; padding: 0 6px; }
    .qat button { gap: 4px; }
    .q1, .q2 { margin-right: 14px; }
    .qd { margin-right: 6px; }
    .qlast { margin-left: 21px; }

    .fbar { display: flex; align-items: center; height: 37px; padding: 0 8px; flex: none; font-size: 12px; }
    .box { display: flex; align-items: center; height: 25px; background: #fff; border: 1px solid #d4d4d4; border-radius: 4px; }
    .name { width: 95px; padding: 0 4px 0 6px; }
    .name input { flex: 1; min-width: 0; }
    .fbar > .icon { margin: 0 8px; }
    .acts { width: 69px; padding: 0 4px 0 5px; gap: 10px; }
    .fx { font: italic 18px/20px "Liberation Serif", serif; color: #333; }
    .formula { flex: 1; margin-left: 4px; padding: 0 3px 0 10px; font: 12px/16px Lato, sans-serif; }
    .formula input { flex: 1; min-width: 0; }

    .work { display: flex; flex: 1; min-height: 0; background: #f1f1f1; }
    excel-sheet { background: #fff; border-right: 1px solid #b5b5b5; }
    .vbar { width: 20px; display: flex; flex-direction: column; align-items: center; padding: 5px 0 2px; gap: 3px; position: relative; background: #efefef; }
    .vthumb { width: 8px; flex: 1; background: #6b6b6b; border-radius: 4px; margin-bottom: 18px; }
    .overthumb { position: absolute; right: 0; bottom: -16px; width: 7px; height: 42px; border-radius: 4px 0 0 4px; background: #4c4c4c; z-index: 3; }

    .sheets { display: flex; align-items: center; height: 26px; border-top: 1px solid #bdbdbd; background: #f7f7f7; flex: none; }
    .arrows { display: flex; gap: 19px; padding-left: 23px; width: 94px; align-items: center; }
    .stab { align-self: flex-start; justify-content: center; width: 76px; height: 24px; margin-top: -1px; background: #fff; border: solid #b5b5b5; border-width: 0 1px; border-bottom: 2px solid #217346; color: #217346; font-weight: 700; font-size: 12px; }
    .add { margin-left: 30px; }
    .grip { margin-left: auto; width: 27px; height: 24px; display: grid; place-items: center; background: #f0f0f0; opacity: .6; }
    .hbar { width: 499px; display: flex; align-items: center; gap: 4px; padding: 0 22px 0 4px; }
    .hthumb { flex: 1; height: 9px; background: #6b6b6b; border-radius: 5px; margin-right: 30px; }

    .status { display: flex; align-items: center; height: 21px; background: #f3f3f3; padding: 0 8px; font-size: 10px; flex: none; border-top: 1px solid #fcfcfc; color: #333; }
    .status .a { width: 53px; }
    .status > .icon + .icon { margin: 0 3px 0 16px; }
    .zoomer { margin-left: auto; display: flex; align-items: center; color: #b5b5b5; }
    .vbtns { display: flex; gap: 25px; margin-right: 17px; }
    .zoomer input { appearance: none; width: 93px; height: 9px; margin: 0 5px; background: linear-gradient(#777, #777) 0 50% / 100% 1px no-repeat; }
    .zoomer input::-webkit-slider-thumb { appearance: none; width: 1px; height: 5px; background: #666; }
    .zoomer button { font-size: 14px; }
    .pct { margin-left: 12px; }

    .taskbar { display: flex; height: 37px; background: #2c211d; flex: none; color: #eee; }
    .start { width: 45px; justify-content: center; }
    .tsearch { display: flex; align-items: center; gap: 11px; width: 322px; background: #f1f1f1; color: #444; padding-left: 11px; font-size: 13px; margin: 1px 0; }
    .tsearch input { flex: 1; min-width: 0; }
    .apps { display: flex; margin-left: 2px; }
    .apps button { width: 43px; justify-content: center; border-bottom: 2px solid transparent; border-top: 2px solid transparent; }
    .apps button.open { border-bottom-color: #76a9d8; }
    .apps button.active { background: #524845; border-top-color: #524845; }
    .apps .bars { width: 22px; display: flex; justify-content: center; align-items: center; }
    .bars span { width: 4px; height: 14px; border: solid #5d524e; border-width: 0 1px; }
    .tray { margin-left: auto; display: flex; align-items: center; gap: 9px; }
    .temp { font-size: 12px; margin-right: 6px; margin-left: -2px; }
    .lang { font-size: 11px; }
    .clock { text-align: center; line-height: 17px; font-size: 11px; margin: 0 3px; }
    .edge { border-left: 1px solid #6a605c; align-self: stretch; width: 4px; margin-left: 9px; }
  `;

  private titleBar() {
    return html`<header class="titlebar">
      <div class="left">${icons.excel}<label for="auto">Salvamento Automático</label><input id="auto" class="toggle" type="checkbox" role="switch" />
        <button aria-label="Salvar">${icons.save}</button><span class="doc">Pasta1  -  Excel</span></div>
      <div class="search">${icons.search}<input type="search" placeholder="Pesquisar (Alt+G)" aria-label="Pesquisar" /></div>
      <div class="right"><span>Hamilton Bandeira Nunes</span><span class="avatar">HB</span><button aria-label="Novidades">${icons.pen}</button>
        <div class="wins"><button aria-label="Minimizar">${icons.min}</button><button aria-label="Restaurar">${icons.restore}</button><button aria-label="Fechar">${icons.close}</button></div></div>
    </header>`;
  }

  private ribbon() {
    const check = (t: string, on: boolean) => html`<label><input type="checkbox" disabled .checked=${on} />${t}</label>`;
    return html`<section class="ribbon">
      <div class="groups">
        <div class="group g1"><div class="body col views">
          <div class="combo"><select disabled aria-label="Modo de exibição"><option>Padrão</option></select>${icons.chevGrey}</div>
          <div class="vicons">${icons.saveGrey}${icons.eyeX}${icons.eyePlus}${icons.list}</div></div>
          <div class="caption">Modo de Exibição Planilha</div></div>
        <div class="group g2"><div class="body">
          <button class="big w57">${icons.gridNormal}<span>Normal</span></button>
          <button class="big w82">${icons.gridBreak}<span>Visualização da<br />Quebra de Página</span></button>
          <div class="col lines"><button>${icons.pageLayout}Layout da Página</button><button>${icons.customView}Modos de Exibição Personalizados</button></div></div>
          <div class="caption">Modos de Exibição de Pasta de Trabalho</div></div>
        <div class="group g3"><div class="body"><div class="checks">${check("Régua", true)}${check("Barra de Fórmulas", true)}${check("Linhas de Grade", false)}${check("Títulos", true)}</div></div>
          <div class="caption">Mostrar</div></div>
        <div class="group g4"><div class="body zooms">
          <button class="big z1">${icons.zoom}<span>Zoom</span></button><button class="big z2">${icons.zoom100}<span>100%</span></button><button class="big z3">${icons.zoomSel}<span>Zoom na<br />Seleção</span></button></div>
          <div class="caption">Zoom</div></div>
        <div class="group g5"><div class="body">
          <div class="col win"><button>${icons.newWin}Nova Janela</button><button class="dark">${icons.arrange}Organizar Tudo</button><button>${icons.freeze}Congelar Painéis ${icons.chevGrey}</button></div>
          <div class="col small">${icons.split}${icons.hide}${icons.unhide}</div>
          <div class="col small two">${icons.sideBySide}${icons.syncScroll}${icons.resetPos}</div>
          <button class="big alt dark">${icons.switchWin}<span>Alternar<span class="ctr">Janelas ${icons.chevDark}</span></span></button></div>
          <div class="caption">Janela</div></div>
        <div class="group g6"><div class="body"><button class="big w57">${icons.macros}<span>Macros</span>${icons.chevGrey}</button></div>
          <div class="caption">Macros</div></div>
        <button class="expand" aria-label="Recolher">${icons.chevBig}</button>
      </div>
      <div class="qat">
        <button class="q1">${icons.form}Formulário</button><button class="q2">${icons.eraser}Apagar borda</button>
        <button class="qd">${icons.borders}Bordas ${icons.chevGrey}</button><button class="qd">${icons.shape}Alterar Forma ${icons.chevGrey}</button>
        <button class="qd">${icons.sort}Classificar e Filtrar ${icons.chevGrey}</button><button>${icons.camera}Câmera</button>
        <button class="qlast" aria-label="Personalizar">${icons.more}</button>
      </div>
    </section>`;
  }

  render() {
    const tabs = ["Arquivo", "Página Inicial", "Inserir", "Layout da Página", "Fórmulas", "Dados", "Revisão", "Exibir", "Desenvolvedor", "Ajuda"];
    const app = (i: TemplateResult, name: string, cls = "") => html`<button class=${cls} aria-label=${name}>${i}</button>`;
    return html`
      ${this.titleBar()}
      <div class="tabs"><nav>${tabs.map((t) => html`<a href="#" class=${classMap({ on: t === "Exibir" })}>${t}</a>`)}</nav>
        <button class="pill">${icons.comment}Comentários</button><button class="pill go">${icons.share}Compartilhar</button></div>
      ${this.ribbon()}
      <div class="fbar">
        <div class="box name"><input value="D5" aria-label="Caixa de nome" /><button aria-label="Abrir">${icons.chevBig}</button></div>
        ${icons.dots}
        <div class="box acts"><button aria-label="Cancelar">${icons.cancel}</button><button aria-label="Inserir">${icons.ok}</button><button class="fx">fx</button></div>
        <div class="box formula"><input value="=SE(E(D9>=D4;E9>=D5" aria-label="Barra de fórmulas" /><button aria-label="Expandir">${icons.chevBig}</button></div>
      </div>
      <main class="work"><excel-sheet></excel-sheet>
        <div class="vbar">${icons.tri("M4 0l4 7H0z", "#6b6b6b")}<div class="vthumb"></div>${icons.tri("M0 0h8L4 7z", "#6b6b6b")}<div class="overthumb"></div></div></main>
      <div class="sheets"><div class="arrows">${icons.tri("M6 0v8L2 4z", "#c4c4c4")}${icons.tri("M2 0v8l4-4z", "#c4c4c4")}</div>
        <button class="stab">Planilha1</button><button class="add" aria-label="Nova planilha">${icons.plus}</button>
        <span class="grip">${icons.dots}</span>
        <div class="hbar">${icons.tri("M7 0v8L0 4z", "#6b6b6b")}<div class="hthumb"></div>${icons.tri("M1 0v8l7-4z", "#6b6b6b")}</div></div>
      <footer class="status"><span class="a">Aponte</span>${icons.macroRec}${icons.access}<span>Acessibilidade: tudo certo</span>
        <div class="zoomer"><span class="vbtns">${icons.vNormal}${icons.vPage}${icons.vBreak}</span><button>−</button><input type="range" min="0" max="100" value="50" aria-label="Zoom" /><button>+</button><span class="pct">100%</span></div></footer>
      <div class="taskbar"><button class="start" aria-label="Iniciar">${icons.win}</button>
        <div class="tsearch">${icons.tbSearch}<input placeholder="Digite aqui para pesquisar" aria-label="Digite aqui para pesquisar" /></div>
        <div class="apps">${app(icons.cortana, "Cortana")}${app(icons.taskView, "Visão de Tarefas")}<span class="bars"><span></span></span>${app(icons.chrome, "Chrome")}${app(icons.remote, "Área Remota")}${app(icons.explorer, "Explorador", "open")}${app(icons.edge, "Edge")}${app(icons.office, "Office")}${app(icons.excelBig, "Excel", "open active")}${app(icons.powerBi, "Power BI")}${app(icons.rec, "Gravador", "open")}${app(icons.help, "Ajuda")}</div>
        <div class="tray">${icons.weather}<span class="temp">24°C</span>${icons.caretUp}${icons.meet}${icons.cloud}${icons.mic}${icons.display}${icons.battery}${icons.wifi}${icons.sound}<span class="lang">POR</span>
          <div class="clock">20:03<br />17/06/2022</div><button aria-label="Notificações">${icons.notif}</button><span class="edge"></span></div>
      </div>`;
  }
}
